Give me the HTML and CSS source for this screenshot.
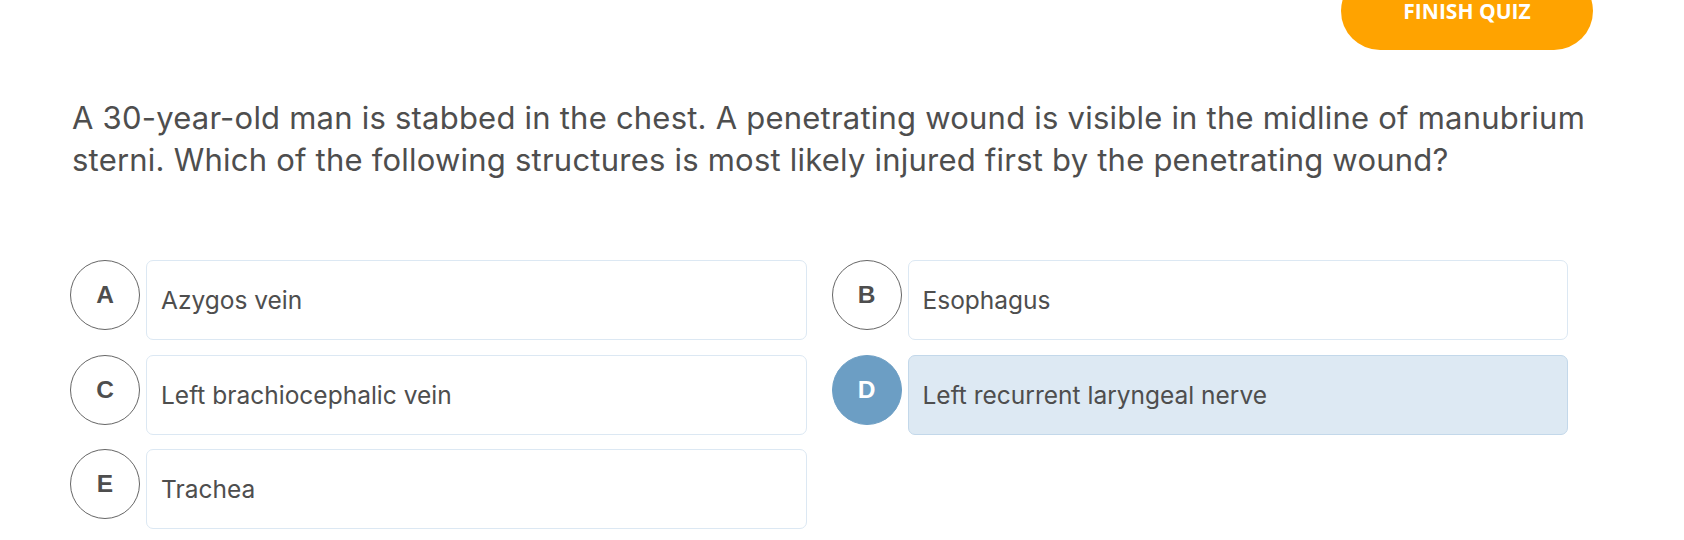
FILE: index.html
```html
<!DOCTYPE html>
<html lang="en">
<head>
<meta charset="utf-8">
<title>Quiz</title>
<link rel="stylesheet" href="styles.css">
</head>
<body>
<div class="page">
  <header class="topbar">
    <button class="finish-btn">FINISH QUIZ</button>
  </header>
  <p class="question">A 30-year-old man is stabbed in the chest. A penetrating wound is visible in the midline of manubrium sterni. Which of the following structures is most likely injured first by the penetrating wound?</p>
  <div class="options">
    <div class="option">
      <div class="letter">A</div>
      <div class="answer">Azygos vein</div>
    </div>
    <div class="option">
      <div class="letter">B</div>
      <div class="answer">Esophagus</div>
    </div>
    <div class="option">
      <div class="letter">C</div>
      <div class="answer">Left brachiocephalic vein</div>
    </div>
    <div class="option selected">
      <div class="letter">D</div>
      <div class="answer">Left recurrent laryngeal nerve</div>
    </div>
    <div class="option">
      <div class="letter">E</div>
      <div class="answer">Trachea</div>
    </div>
  </div>
</div>
</body>
</html>
```

FILE: styles.css
```css
html, body {
  margin: 0;
  padding: 0;
  background: #ffffff;
  overflow: hidden;
}

.page {
  width: 1684px;
  height: 540px;
  overflow: hidden;
  font-family: "Inter", "Liberation Sans", sans-serif;
  color: #4e4e4e;
}

.topbar {
  display: flex;
  justify-content: flex-end;
  padding-right: 91px;
}

.finish-btn {
  margin-top: -28px;
  width: 252px;
  height: 78px;
  border: none;
  border-radius: 39px;
  background: #ffa300;
  color: #ffffff;
  font-family: "Open Sans", "Liberation Sans", sans-serif;
  font-weight: 700;
  font-size: 21px;
  padding: 0;
  line-height: 78px;
}

.question {
  margin: 47px 55px 0 72px;
  font-size: 31px;
  letter-spacing: 0.22px;
  line-height: 42px;
  font-weight: 400;
  color: #4e4e4e;
}

.options {
  margin: 79px 0 0 70px;
  width: 1498px;
  display: grid;
  grid-template-columns: 1fr 1fr;
  column-gap: 25px;
  row-gap: 14.5px;
}

.option {
  display: flex;
  gap: 6px;
  align-items: flex-start;
}

.letter {
  flex: 0 0 auto;
  width: 70px;
  height: 70px;
  box-sizing: border-box;
  border: 1px solid #666666;
  border-radius: 50%;
  display: flex;
  align-items: center;
  justify-content: center;
  font-family: "Liberation Sans", sans-serif;
  font-weight: 700;
  font-size: 24.5px;
  color: #4e4e4e;
}

.answer {
  flex: 1 1 auto;
  height: 80px;
  box-sizing: border-box;
  border: 1px solid #dce8f3;
  border-radius: 7px;
  background: #ffffff;
  display: flex;
  align-items: center;
  padding-left: 14px;
  font-size: 24.5px;
  color: #4e4e4e;
}

.selected .letter {
  background: #6c9ec4;
  border-color: #6c9ec4;
  color: #ffffff;
}

.selected .answer {
  background: #dde9f3;
  border-color: #c3d8ea;
}
```
